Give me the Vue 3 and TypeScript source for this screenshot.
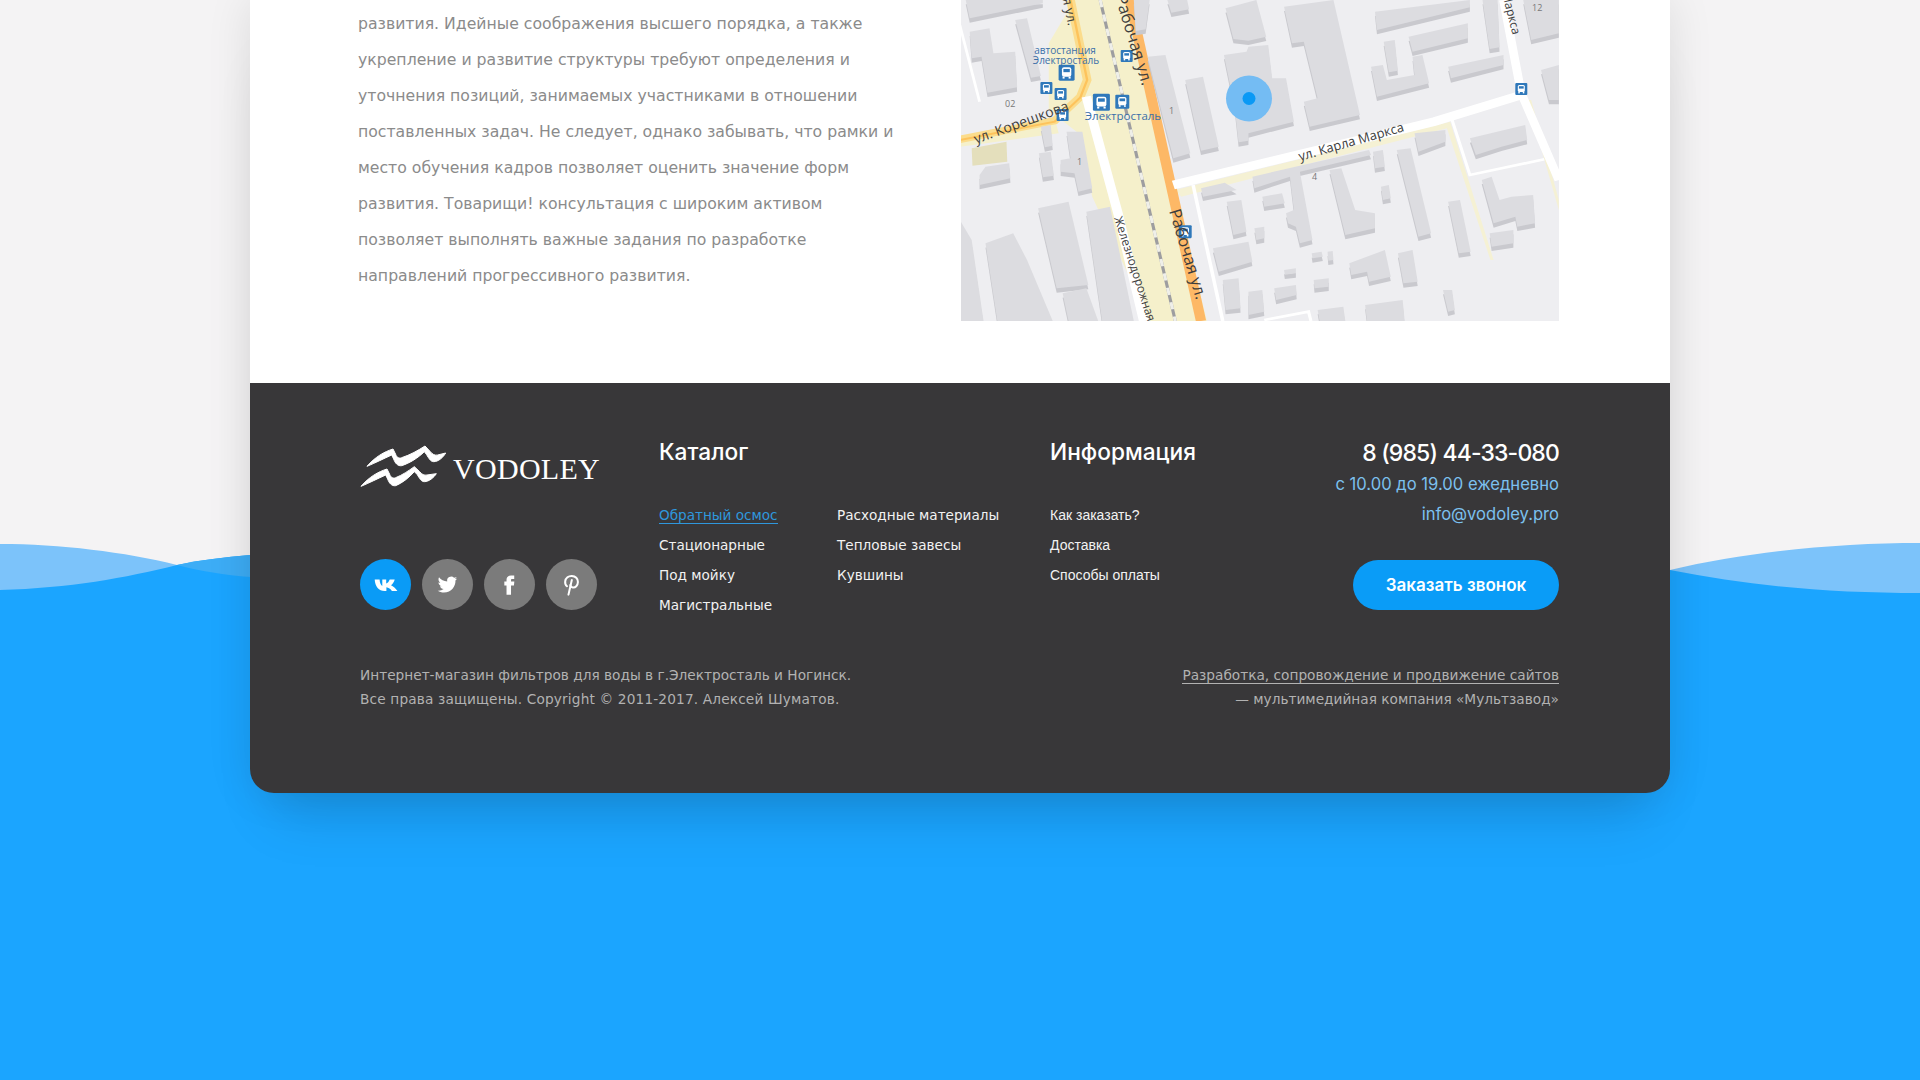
<template>
  <div class="page">
    <svg class="waves" width="1920" height="1080" viewBox="0 0 1920 1080">
      <path d="M0 544C60 544 125 552 177 565C205 571 230 575 250 577L1670 570C1750 551 1840 543 1920 543L1920 1080L0 1080Z" fill="#7cc3fa" />
      <path d="M0 590C70 588 125 578 177 565C200 560 225 557 250 555L250 1080L0 1080Z" fill="#1ba5ff" />
      <path d="M177 565C200 560 225 557 250 555L250 577C225 575 200 571 177 565Z" fill="#3dadf6" />
      <path d="M1670 570C1750 586 1830 593 1920 593L1920 1080L1670 1080Z" fill="#1ba5ff" />
      <rect x="250" y="555" width="1420" height="525" fill="#1ba5ff" />
    </svg>

    <div class="card">
      <section class="about">
        <div class="about-text">
          <p v-for="line in aboutLines" :key="line">{{ line }}</p>
        </div>
        <svg class="map" width="598" height="321" viewBox="0 0 598 321">
          <rect width="598" height="321" fill="#eeeef1" />
          <!-- координаты снимались с увеличенного кропа, поэтому общий scale -->
          <g class="map-shapes" transform="scale(0.3954 0.3333) translate(-3 0)">
            <polygon points="225,130 290,0 425,0 625,963 480,963 335,590 300,400 225,330" fill="#f5f0cb" />
            <polygon points="0,415 240,355 250,400 0,440" fill="#f5f0cb" />
            <polygon points="545,570 1240,365 1350,780 1342,780 1232,385 560,590" fill="#f5f1d4" />
            <polygon points="1435,300 1445,300 1515,600 1515,630" fill="#f5f1d4" />
            <polygon points="30,445 118,425 120,485 32,497" fill="#e4dfbc" />
            <polyline points="0,418 240,362 305,290 322,240 280,0" fill="none" stroke="#fbdc8c" stroke-width="22" />
            <polyline points="0,420 240,365 305,292 322,240 280,0" fill="none" stroke="#fdc35c" stroke-width="6" />
            <line x1="430" y1="0" x2="610" y2="963" stroke="#fdb866" stroke-width="26" />
            <line x1="355" y1="0" x2="545" y2="963" stroke="#9d9da0" stroke-width="8" />
            <line x1="355" y1="0" x2="545" y2="963" stroke="#efefe9" stroke-width="8" stroke-dasharray="22 22" />
            <polyline points="320,290 400,640 465,963" fill="none" stroke="#fff" stroke-width="24" />
            <polyline points="540,555 1200,365 1420,285" fill="none" stroke="#fff" stroke-width="26" />
            <polyline points="1375,0 1420,280 1515,540" fill="none" stroke="#fff" stroke-width="22" />
            <polyline points="590,555 665,963" fill="none" stroke="#fff" stroke-width="9" />
            <polyline points="1245,360 1290,525 1478,478" fill="none" stroke="#fff" stroke-width="8" />
            <polyline points="770,960 882,935 888,963" fill="none" stroke="#fff" stroke-width="8" />
            <polyline points="0,75 50,305" fill="none" stroke="#fff" stroke-width="7" />
            <g v-for="(b, i) in buildings" :key="i">
              <polygon :points="b" fill="#c9c9ce" transform="translate(0 13)" />
              <polygon :points="b" fill="#dcdce0" />
            </g>
          </g>
          <g v-for="(s, i) in stops" :key="i" :transform="`translate(${s[0]} ${s[1]}) scale(${s[2] / 12})`">
            <rect x="-6" y="-6" width="12" height="12" rx="1" fill="#2f78ba" />
            <rect x="-3.5" y="-4" width="7" height="7" rx="1.5" fill="#fff" />
            <rect x="-2.4" y="-2.8" width="4.800" height="2.400" fill="#2f78ba" />
            <rect x="-3" y="3" width="1.500" height="1.400" fill="#fff" />
            <rect x="1.500" y="3" width="1.500" height="1.400" fill="#fff" />
          </g>
          <text x="104" y="54" class="map-blue" text-anchor="middle">автостанция</text>
          <text x="105" y="64" class="map-blue" text-anchor="middle">Электросталь</text>
          <text x="162" y="120" class="map-blue big" text-anchor="middle">Электросталь</text>
          <text transform="translate(15 144) rotate(-20)" class="map-road mid">ул. Корешкова</text>
          <text transform="translate(339 161) rotate(-16)" class="map-road small">ул. Карла Маркса</text>
          <text transform="translate(208 211) rotate(73)" class="map-road">Рабочая ул.</text>
          <text transform="translate(154 -3) rotate(73)" class="map-road">Рабочая ул.</text>
          <text transform="translate(153 218) rotate(72)" class="map-road tiny">Железнодорожная</text>
          <text transform="translate(92 -46) rotate(78)" class="map-road small">Рабочая ул.</text>
          <text transform="translate(541 -7) rotate(76)" class="map-road tiny">Маркса</text>
          <text x="571" y="11" class="map-num">12</text>
          <text x="44" y="107" class="map-num">02</text>
          <text x="208" y="114" class="map-num">1</text>
          <text x="116" y="165" class="map-num">1</text>
          <text x="351" y="180" class="map-num">4</text>
          <circle cx="288" cy="98.500" r="23" fill="#74bcf3" />
          <circle cx="288" cy="98.500" r="6.500" fill="#0a99f5" />
        </svg>
      </section>

      <footer class="footer">
        <div class="footer-top">
          <div class="brand">
            <div class="logo">
              <svg width="100" height="55" viewBox="0 0 300 165">
                <g fill="#fff" stroke="#fff" stroke-width="3" stroke-linejoin="round">
                  <path d="M36 76C60 48 88 32 114 24L122 40C124 48 132 54 140 50C165 42 190 28 210 15L226 32C232 40 240 44 248 42L272 36C264 50 250 62 236 62C226 62 222 52 214 40L208 32C190 50 165 66 140 74C128 76 120 66 116 54L110 42C88 52 60 66 36 76Z" />
                  <path transform="translate(-18 60)" d="M36 76C60 48 88 32 114 24L122 40C124 48 132 54 140 50C160 42 178 30 196 17L212 32C218 40 226 44 234 42L262 38C254 50 240 62 226 62C216 62 212 52 204 40L196 32C180 50 160 66 140 74C128 76 120 66 116 54L110 42C88 52 60 66 36 76Z" />
                </g>
              </svg>
              <span class="logo-name">VODOLEY</span>
            </div>
            <div class="socials">
              <a class="social active">
                <svg width="24" height="24" viewBox="0 0 24 24" fill="#fff">
                  <path d="M.7 6.500H5.600C5.800 9.500 6.700 12 8.300 13V6.500H12.200V10.600C13.600 10.200 14.900 8.600 15.700 6.500H20.700C20.100 9 18.700 11 17 12.200C19.100 13.300 21.900 15.300 23.400 18H17.900C16.600 16 14.600 14.600 12.400 14.300V18H10.500C5 18 1 13.500 .7 6.500Z" />
                </svg>
              </a>
              <a class="social">
                <svg width="21" height="21" viewBox="0 0 24 24" fill="#fff">
                  <path d="M23 5.100C22.200 5.500 21.300 5.700 20.400 5.800C21.300 5.200 22 4.400 22.400 3.300C21.500 3.800 20.500 4.200 19.500 4.400A4.600 4.600 0 0 0 11.700 8.600C7.900 8.400 4.500 6.600 2.300 3.800C1.100 5.900 1.700 8.600 3.700 9.900C3 9.900 2.300 9.700 1.700 9.300C1.700 11.500 3.200 13.400 5.400 13.900C4.700 14.100 4 14.100 3.300 14C3.900 15.800 5.600 17.100 7.600 17.200A9.200 9.200 0 0 1 .8 19.100C2.900 20.400 5.300 21.200 7.900 21.200C16.500 21.200 21.400 13.900 21.100 7.400C22 6.700 22.400 6 23 5.100Z" />
                </svg>
              </a>
              <a class="social">
                <svg class="fb" width="22" height="22" viewBox="0 0 24 24" fill="#fff">
                  <path d="M14.200 8.300V6.600C14.200 5.700 14.800 5.500 15.200 5.500H17.700V1.500H14.200C10.300 1.500 9.300 4.400 9.300 6.300V8.300H6.900V12.500H9.300V22.500H14.200V12.500H17.400L17.800 8.300Z" />
                </svg>
              </a>
              <a class="social">
                <svg width="27" height="27" viewBox="0 0 24 24" fill="none" stroke="#fff" stroke-width="1.800" stroke-linecap="round">
                  <path d="M8 13.500C6.700 12.500 6.200 10.800 6.400 9.200C6.800 6.200 9.400 4.300 12.300 4.400C15.500 4.500 17.800 6.700 17.700 9.800C17.600 13 15.400 15 13.200 14.700C11.700 14.500 11 13.500 11 12.500" />
                  <path d="M12.300 8L9.300 21" />
                </svg>
              </a>
            </div>
          </div>

          <nav class="catalog">
            <div class="heading">Каталог</div>
            <div class="catalog-cols">
              <ul class="links first">
                <li v-for="(item, i) in catalogFirst" :key="item"><a :class="{ current: i === 0 }">{{ item }}</a></li>
              </ul>
              <ul class="links">
                <li v-for="item in catalogSecond" :key="item"><a>{{ item }}</a></li>
              </ul>
            </div>
          </nav>

          <nav class="info">
            <div class="heading">Информация</div>
            <ul class="links narrow">
              <li v-for="item in infoLinks" :key="item"><a>{{ item }}</a></li>
            </ul>
          </nav>

          <div class="contacts">
            <div class="phone">8 (985) 44-33-080</div>
            <div class="hours">с 10.00 до 19.00 ежедневно</div>
            <a class="email">info@vodoley.pro</a>
            <button class="call">Заказать звонок</button>
          </div>
        </div>

        <div class="footer-bottom">
          <div>
            Интернет-магазин фильтров для воды в г.Электросталь и Ногинск.<br />
            <span class="copyright">Все права защищены. Copyright © 2011-2017. Алексей Шуматов.</span>
          </div>
          <div class="credit">
            <a>Разработка, сопровождение и продвижение сайтов</a><br />
            — мультимедийная компания «Мультзавод»
          </div>
        </div>
      </footer>
    </div>
  </div>
</template>

<script setup lang="ts">
const aboutLines = [
  'развития. Идейные соображения высшего порядка, а также',
  'укрепление и развитие структуры требуют определения и',
  'уточнения позиций, занимаемых участниками в отношении',
  'поставленных задач. Не следует, однако забывать, что рамки и',
  'место обучения кадров позволяет оценить значение форм',
  'развития. Товарищи! консультация с широким активом',
  'позволяет выполнять важные задания по разработке',
  'направлений прогрессивного развития.'
]

const catalogFirst = ['Обратный осмос', 'Стационарные', 'Под мойку', 'Магистральные']
const catalogSecond = ['Расходные материалы', 'Тепловые завесы', 'Кувшины']
const infoLinks = ['Как заказать?', 'Доставка', 'Способы оплаты']

// x, y, размер значка остановки
const stops: number[][] = [
  [105.6, 72.7, 16], [165.7, 56, 12], [85.4, 88, 12], [99.6, 94, 12], [101.6, 115, 12],
  [140.4, 102.3, 17], [161.3, 101.7, 14], [560.3, 89, 12], [224.2, 231.7, 13]
]

const buildings = [
  '15,0 210,0 210,10 25,55',
  '25,95 75,85 85,160 140,155 145,262 70,278 55,170 30,175',
  '140,60 170,55 205,228 180,233',
  '525,0 575,0 580,28 535,38',
  '440,0 480,0 470,88 445,93',
  '672,25 750,0 775,110 730,122 692,117',
  '820,20 945,0 1012,345 885,380 870,305 905,295 870,125 840,130',
  '1050,35 1290,0 1290,22 1055,90',
  '1135,110 1285,70 1285,115 1145,155',
  '1072,125 1100,120 1108,212 1085,217',
  '1040,200 1070,195 1080,240 1150,225 1145,170 1170,165 1187,250 1055,290',
  '1235,200 1375,165 1375,195 1242,235',
  '1322,0 1360,0 1365,142 1340,147',
  '1425,0 1515,0 1515,100 1445,120',
  '1470,210 1515,195 1515,300 1490,300',
  '668,165 725,155 730,140 780,135 790,235 825,235 845,365 730,400 730,422 705,427 695,320',
  '570,240 615,230 655,440 610,452',
  '475,170 520,165 583,460 540,475',
  '205,380 230,375 235,437 215,442',
  '200,460 230,455 238,527 210,532',
  '270,395 310,395 335,565 300,575 290,520 255,515 255,480 280,475',
  '50,525 65,500 125,490 128,535 50,555',
  '198,625 275,605 325,855 245,865',
  '320,635 380,620 440,963 360,963',
  '65,730 135,700 170,780 235,963 95,963',
  '260,880 320,865 350,963 275,963',
  '610,565 670,548 700,570 615,590',
  '675,605 712,600 725,695 692,705',
  '740,530 1035,450 1040,465 860,515 892,720 860,730 850,680 830,670 825,640 845,630 835,530 745,565',
  '765,590 815,580 822,610 770,620',
  '935,510 965,505 1000,630 1050,640 1050,685 975,705',
  '1045,455 1070,450 1075,500 1050,505',
  '1065,560 1085,555 1090,595 1070,600',
  '1105,450 1140,445 1192,700 1160,710',
  '1150,400 1228,390 1228,425 1160,455',
  '1235,605 1265,600 1292,755 1262,760',
  '1320,540 1345,530 1365,600 1395,590 1450,585 1455,670 1410,680 1405,650 1350,670',
  '1340,700 1400,690 1400,730 1345,740',
  '1290,415 1430,375 1435,420 1370,440 1305,465',
  '640,745 730,725 740,785 655,815',
  '745,685 770,680 770,715 750,720',
  '665,840 705,835 710,925 672,930',
  '730,875 765,870 770,935 730,945',
  '795,865 850,855 852,885 800,900',
  '820,810 850,805 850,820 822,824',
  '890,760 915,755 918,770 892,775',
  '930,755 943,753 945,780 932,782',
  '895,840 933,835 933,860 897,865',
  '985,790 1075,750 1090,830 1035,845 1030,815 990,825',
  '1108,760 1145,750 1158,845 1122,850',
  '1222,870 1245,870 1252,930 1235,935',
  '905,930 970,920 975,963 910,963',
  '1025,915 1120,900 1125,963 1030,963',
  '0,660 30,720 60,963 0,963'
]
</script>

<style>
html,
body {
  margin: 0;
  background: #f4f3f4;
}
</style>

<style scoped>
.page {
  position: relative;
  height: 1080px;
  overflow: hidden;
  font-family: "DejaVu Sans", sans-serif;
}

.waves {
  position: absolute;
  left: 0;
  top: 0;
}

.card {
  position: relative;
  width: 1420px;
  margin: 0 auto;
  border-radius: 0 0 24px 24px;
  box-shadow: 0 0 45px rgba(0, 0, 0, 0.1), 0 45px 55px -25px rgba(0, 0, 0, 0.14);
}

.about {
  display: flex;
  background: #fff;
  padding: 6px 111px 62px 108px;
  height: 315px;
  align-items: flex-start;
}

.about-text {
  width: 603px;
  flex: none;
}

.about-text p {
  margin: 0;
  font-size: 15.7px;
  line-height: 36px;
  color: #8b8b8b;
  white-space: nowrap;
}

.map {
  display: block;
  margin-top: -6px;
  flex: none;
}

.map-shapes {
  filter: blur(0.5px);
}

.map-blue {
  font-family: "Open Sans", sans-serif;
  font-size: 10px;
  fill: #3b6fa8;
}

.map-blue.big {
  font-size: 11.5px;
}

.map-road {
  font-family: "Open Sans", sans-serif;
  font-size: 16.5px;
  fill: #3d3d3d;
}

.map-road.mid {
  font-size: 14px;
}

.map-road.small {
  font-size: 13px;
}

.map-road.tiny {
  font-size: 12px;
}

.map-num {
  font-family: "Open Sans", sans-serif;
  font-size: 9px;
  fill: #777;
}

.footer {
  background: #383739;
  border-radius: 0 0 24px 24px;
  padding: 55px 111px 81px 110px;
  color: #fff;
}

.footer-top {
  display: flex;
  height: 182px;
}

.brand {
  width: 299px;
  flex: none;
}

.logo {
  display: flex;
  align-items: center;
  height: 55px;
  margin: 3px 0 0 -5px;
}

.logo-name {
  font-family: "Liberation Serif", serif;
  font-size: 30px;
  letter-spacing: 0.3px;
  margin-left: -2px;
  color: #fff;
}

.socials {
  display: flex;
  gap: 11px;
  margin-top: 63px;
}

.social {
  width: 51px;
  height: 51px;
  border-radius: 50%;
  background: #7b7b7b;
  display: flex;
  align-items: center;
  justify-content: center;
}

.social.active {
  background: #0a9bf6;
}

.fb {
  margin-left: -2px;
}

.catalog {
  width: 391px;
  flex: none;
}

.info {
  flex: 1;
}

.heading {
  font-family: "Inter", sans-serif;
  font-size: 22.7px;
  font-weight: 500;
  line-height: 28px;
  margin-bottom: 34px;
}

.catalog-cols {
  display: flex;
}

.links {
  list-style: none;
  margin: 0;
  padding: 0;
  font-size: 13.6px;
  line-height: 30px;
  color: #f2f2f2;
}

.links.first {
  width: 178px;
}

.links.narrow {
  font-family: "Liberation Sans", sans-serif;
  font-size: 14px;
}

.links .current {
  color: #2f97dd;
  border-bottom: 1px solid #2f97dd;
}

.contacts {
  display: flex;
  flex-direction: column;
  align-items: flex-end;
  font-family: "Inter", sans-serif;
}

.phone {
  font-size: 23px;
  font-weight: 500;
  line-height: 28px;
  letter-spacing: -0.85px;
  margin-top: 1px;
  margin-bottom: 2px;
}

.hours,
.email {
  font-size: 16.6px;
  line-height: 30px;
  color: #7cc0ee;
}

.call {
  margin-top: 31px;
  width: 206px;
  height: 50px;
  border: none;
  border-radius: 25px;
  background: #0a9cf7;
  color: #fff;
  font-family: "Inter", sans-serif;
  font-size: 17px;
  font-weight: 600;
}

.footer-bottom {
  display: flex;
  justify-content: space-between;
  margin-top: 43px;
  margin-bottom: 1px;
  font-size: 13.7px;
  line-height: 24px;
  color: #b2b2b2;
}

.copyright {
  letter-spacing: 0.15px;
}

.credit {
  text-align: right;
}

.credit a {
  border-bottom: 1px solid #b2b2b2;
}
</style>
